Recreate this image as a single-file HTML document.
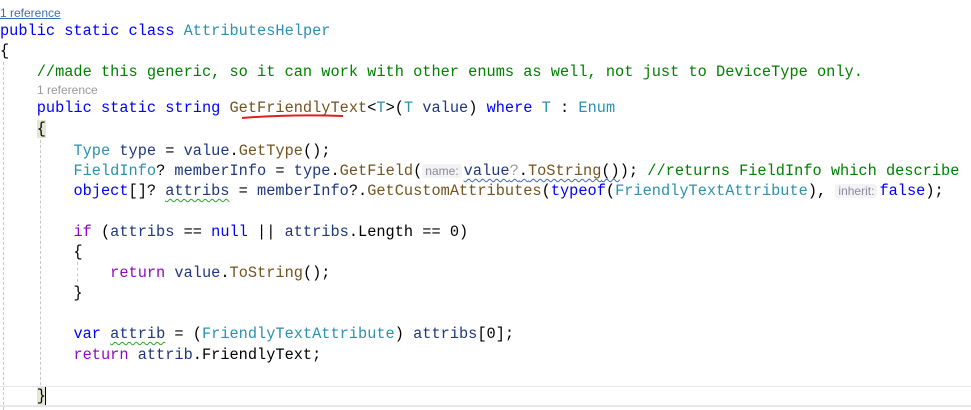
<!DOCTYPE html>
<html><head><meta charset="utf-8"><style>
html,body{margin:0;padding:0;background:#fff;width:971px;height:410px;overflow:hidden;position:relative}
.l{position:absolute;left:0;white-space:pre;font-family:"Liberation Mono",monospace;font-size:15.3px;line-height:20px;color:#000}
.ref{position:absolute;white-space:pre;font-family:"Liberation Sans",sans-serif;font-size:12px;color:#999}
.k{color:#0000ff}.t{color:#2b91af}.m{color:#74531f}.c{color:#008000}.v{color:#1f377f}.p{color:#8f08c4}
.h{font-family:"Liberation Sans",sans-serif;font-size:12px;color:#8a8aa0;background:#f3f3f3;border-radius:3px;padding:0 3px;margin-right:2px}
.g{position:absolute;width:0;border-left:1px dashed #c8c8c8}
.sq{text-decoration:underline wavy #2ca02c;text-decoration-thickness:1px;text-underline-offset:3px}
.sqb{text-decoration:underline wavy #4060c0;text-decoration-thickness:1px;text-underline-offset:3px}
.br{background:#e3e7d3}
</style></head><body>
<div class="g" style="left:3px;top:62px;height:348px"></div>
<div class="g" style="left:40px;top:140px;height:250px"></div>
<div class="g" style="left:77px;top:262px;height:20px"></div>
<div style="position:absolute;left:0;top:386px;width:971px;height:1px;background:#e6e6ee"></div>
<div style="position:absolute;left:0;top:405px;width:971px;height:2px;background:#e6e6ee"></div>
<div class="ref" style="left:0;top:6px;color:#3a6fb5;text-decoration:underline">1 reference</div>
<div class="l" style="top:21px"><span class="k">public static class</span> <span class="t">AttributesHelper</span></div>
<div class="l" style="top:41px">{</div>
<div class="l" style="top:62px">    <span class="c">//made this generic, so it can work with other enums as well, not just to DeviceType only.</span></div>
<div class="ref" style="left:37px;top:83px">1 reference</div>
<div class="l" style="top:98px">    <span class="k">public static string</span> <span class="m">GetFriendlyText</span>&lt;<span class="t">T</span>&gt;(<span class="t">T</span> <span class="v">value</span>) <span class="k">where</span> <span class="t">T</span> : <span class="t">Enum</span></div>
<svg style="position:absolute;left:240px;top:113px" width="105" height="8"><path d="M2 5 Q50 1 103 3" stroke="#e02020" stroke-width="2" fill="none"/></svg>
<div class="l" style="top:119px">    <span class="br">{</span></div>
<div class="l" style="top:141px">        <span class="t">Type</span> <span class="v">type</span> = <span class="v">value</span>.<span class="m">GetType</span>();</div>
<div class="l" style="top:161px">        <span class="t">FieldInfo</span>? <span class="v">memberInfo</span> = <span class="v">type</span>.<span class="m">GetField</span>(<span class="h">name:</span><span class="sqb"><span class="v">value</span><span style="color:#999">?</span>.<span class="m">ToString</span>()</span>); <span class="c">//returns FieldInfo which describe</span></div>
<div class="l" style="top:181px">        <span class="k">object</span>[]? <span class="v sq">attribs</span> = <span class="v">memberInfo</span>?.<span class="m">GetCustomAttributes</span>(<span class="k">typeof</span>(<span class="t">FriendlyTextAttribute</span>), <span class="h">inherit:</span><span class="k">false</span>);</div>
<div class="l" style="top:222px">        <span class="p">if</span> (<span class="v">attribs</span> == <span class="k">null</span> || <span class="v">attribs</span>.Length == 0)</div>
<div class="l" style="top:242px">        {</div>
<div class="l" style="top:263px">            <span class="p">return</span> <span class="v">value</span>.<span class="m">ToString</span>();</div>
<div class="l" style="top:283px">        }</div>
<div class="l" style="top:324px">        <span class="k">var</span> <span class="v sq">attrib</span> = (<span class="t">FriendlyTextAttribute</span>) <span class="v">attribs</span>[0];</div>
<div class="l" style="top:345px">        <span class="p">return</span> <span class="v">attrib</span>.FriendlyText;</div>
<div class="l" style="top:386px">    <span class="br">}</span></div>
<div style="position:absolute;left:45px;top:387px;width:1px;height:18px;background:#000"></div>
</body></html>
